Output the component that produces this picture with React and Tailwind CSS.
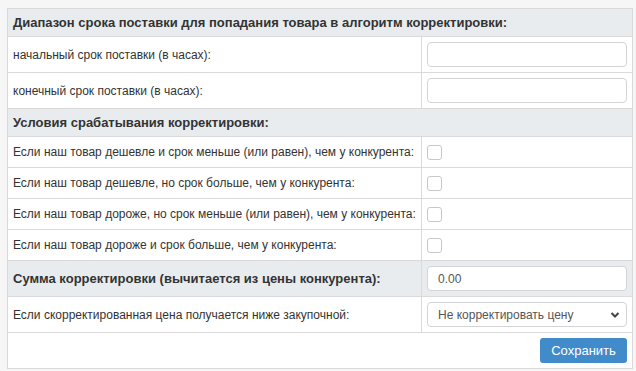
import React from "react";

const font = { fontFamily: '"Liberation Sans", Arial, sans-serif' };

const conditions = [
  "Если наш товар дешевле и срок меньше (или равен), чем у конкурента:",
  "Если наш товар дешевле, но срок больше, чем у конкурента:",
  "Если наш товар дороже, но срок меньше (или равен), чем у конкурента:",
  "Если наш товар дороже и срок больше, чем у конкурента:",
];

function Checkbox() {
  return <div className="w-[15px] h-[15px] rounded-[3px] border border-[#c8c8c8] bg-white" />;
}

function TextInput({ value }) {
  return (
    <div className="h-[25px] w-full rounded-[4px] border border-[#d4d4d4] bg-white px-[10px] flex items-center text-[12px] text-[#555]">
      {value}
    </div>
  );
}

const cell = "border border-[#dadada] px-[5px] whitespace-nowrap";

export default function App() {
  return (
    <div className="w-[636px] h-[371px] bg-[#f6f6f6] pt-[8px] pl-[7px]" style={font}>
      <table className="w-[625px] table-fixed border-collapse bg-white text-[#333] border border-[#dadada]">
        <colgroup>
          <col className="w-[414px]" />
          <col className="w-[211px]" />
        </colgroup>
        <tbody>
          <tr className="h-[28px] bg-[#e9ecef]">
            <td colSpan={2} className={`${cell} text-[13px] font-bold`}>
              Диапазон срока поставки для попадания товара в алгоритм корректировки:
            </td>
          </tr>
          <tr className="h-[36px]">
            <td className={`${cell} text-[12px]`}>начальный срок поставки (в часах):</td>
            <td className="border border-[#dadada] px-[5px]"><TextInput /></td>
          </tr>
          <tr className="h-[36px]">
            <td className={`${cell} text-[12px]`}>конечный срок поставки (в часах):</td>
            <td className="border border-[#dadada] px-[5px]"><TextInput /></td>
          </tr>
          <tr className="h-[28px] bg-[#e9ecef]">
            <td colSpan={2} className={`${cell} text-[13px] font-bold`}>
              Условия срабатывания корректировки:
            </td>
          </tr>
          {conditions.map((c, i) => (
            <tr key={i} className="h-[31px]">
              <td className={`${cell} text-[12px] overflow-visible`}>{c}</td>
              <td className="border border-[#dadada] px-[5px]"><Checkbox /></td>
            </tr>
          ))}
          <tr className="h-[36px] bg-[#e9ecef]">
            <td className={`${cell} text-[13px] font-bold`}>
              Сумма корректировки (вычитается из цены конкурента):
            </td>
            <td className="border border-[#dadada] px-[5px]"><TextInput value="0.00" /></td>
          </tr>
          <tr className="h-[36px]">
            <td className={`${cell} text-[12px]`}>
              Если скорректированная цена получается ниже закупочной:
            </td>
            <td className="border border-[#dadada] px-[5px]">
              <div className="h-[25px] w-full rounded-[4px] border border-[#d4d4d4] bg-white pl-[10px] pr-[6px] flex items-center justify-between text-[12px] text-[#555]">
                <span>Не корректировать цену</span>
                <svg width="10" height="8" viewBox="0 0 10 8">
                  <path d="M1.5 2 L5 5.5 L8.5 2" fill="none" stroke="#444" strokeWidth="2" />
                </svg>
              </div>
            </td>
          </tr>
          <tr className="h-[36px]">
            <td colSpan={2} className="border border-[#dadada] px-[5px]">
              <div className="flex justify-end">
                <button className="h-[25px] w-[87px] rounded-[3px] bg-[#428bca] text-white text-[13px]" style={font}>
                  Сохранить
                </button>
              </div>
            </td>
          </tr>
        </tbody>
      </table>
    </div>
  );
}
